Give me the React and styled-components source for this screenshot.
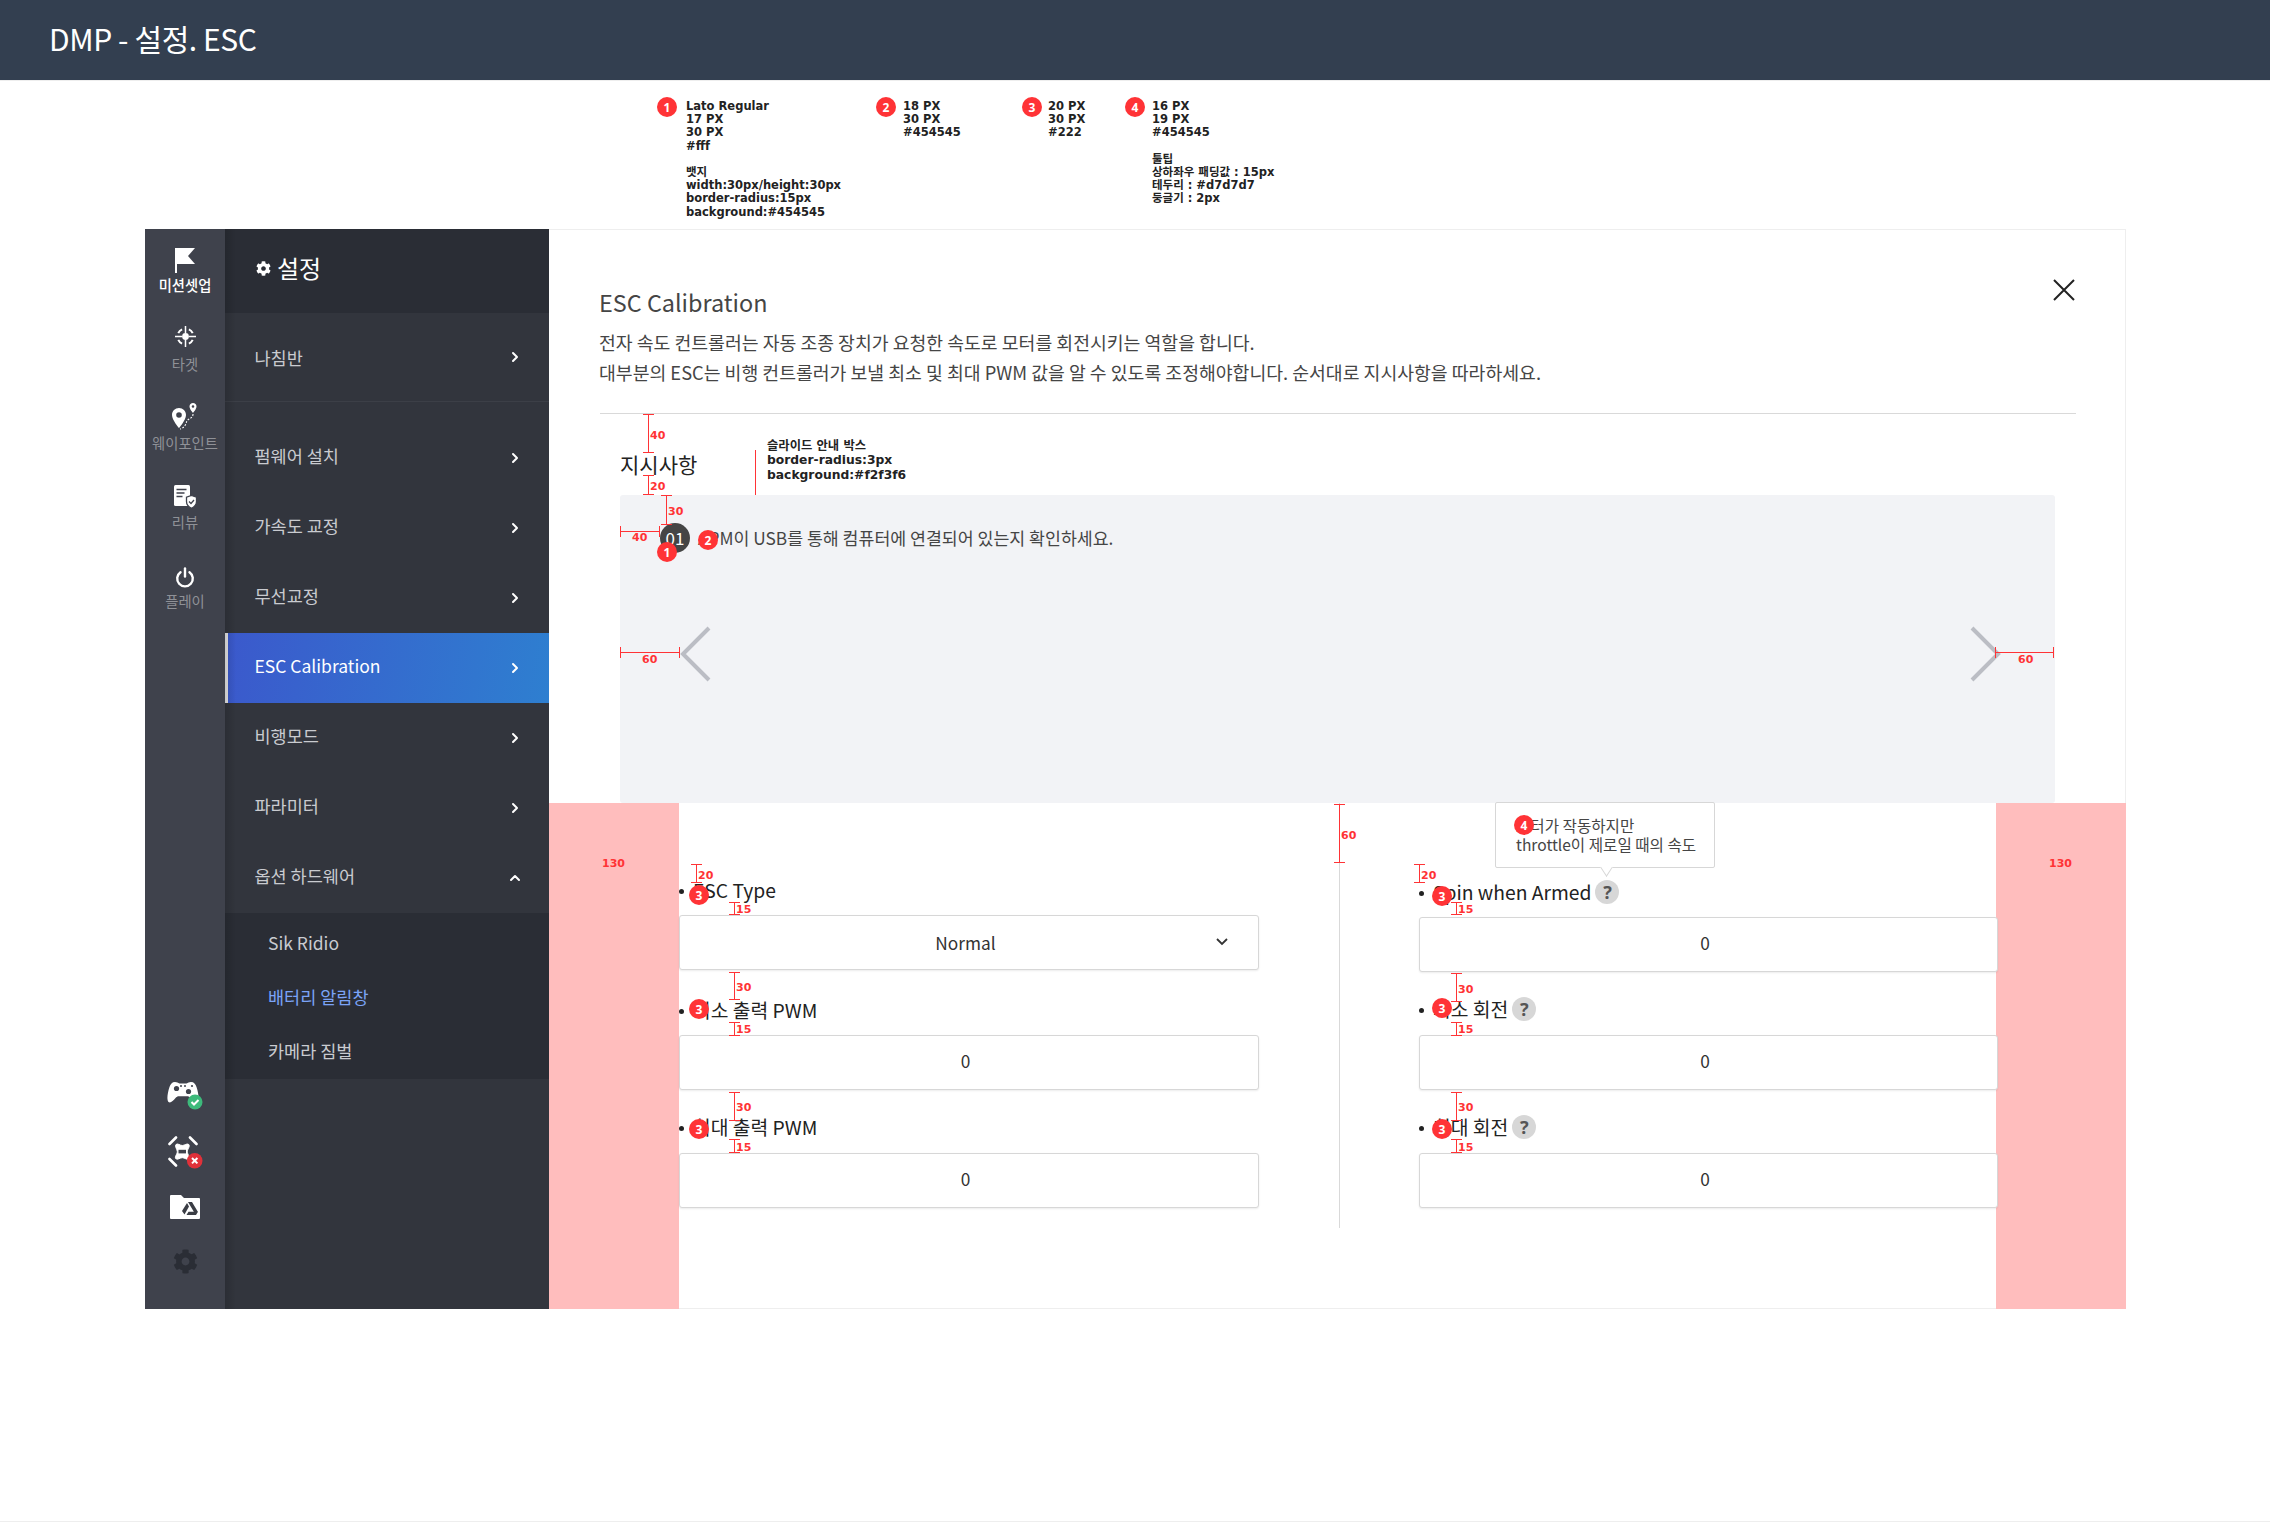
import styled, { createGlobalStyle } from 'styled-components'
import { FaCog } from 'react-icons/fa'

const RED = '#ff3336'
const RAIL = '#3f424c'

const GlobalStyle = createGlobalStyle`
  html, body {
    margin: 0;
    padding: 0;
    background: #fff;
  }
  body {
    font-family: "Noto Sans CJK KR", "Noto Sans", sans-serif;
    color: #454545;
  }
  * {
    box-sizing: border-box;
  }
`

const Page = styled.div`
  position: relative;
  width: 2270px;
  height: 1522px;
  display: flex;
  flex-direction: column;
  overflow: hidden;
`

const TopBar = styled.header`
  height: 81px;
  flex: none;
  background: #333f50;
  color: #fff;
  display: flex;
  align-items: center;
  padding: 0 0 4px 49px;
  font-size: 30px;
  font-weight: 400;
  letter-spacing: -0.4px;
  border-bottom: 1px solid #eee;
`

/* spec notes above the panel */
const SpecStrip = styled.section`
  height: 148px;
  flex: none;
  display: flex;
  padding: 16px 0 0 657px;
`

const SpecCol = styled.div`
  display: flex;
  align-items: flex-start;
  width: ${(p) => p.$width}px;
  gap: ${(p) => p.$gap}px;
`

const SpecText = styled.div`
  font-family: "DejaVu Sans", "Noto Sans CJK KR", sans-serif;
  font-weight: 700;
  font-size: 11.5px;
  line-height: 13.2px;
  color: #222;
  white-space: pre;
  padding-top: 3px;
`

const Badge = styled.span`
  width: 20px;
  height: 20px;
  flex: none;
  border-radius: 50%;
  background: ${RED};
  color: #fff;
  font-family: "Noto Sans", sans-serif;
  font-size: 12px;
  font-weight: 700;
  display: flex;
  align-items: center;
  justify-content: center;
`

const Panel = styled.main`
  width: 1981px;
  height: 1080px;
  flex: none;
  margin-left: 145px;
  display: flex;
`

/* icon rail */
const Rail = styled.nav`
  width: 80px;
  flex: none;
  background: ${RAIL};
  display: flex;
  flex-direction: column;
`

const RailItem = styled.div`
  height: 79px;
  display: flex;
  flex-direction: column;
  align-items: center;
  justify-content: flex-end;
  gap: 4px;
  padding-bottom: 1px;
  font-size: 14.3px;
  line-height: 18px;
  white-space: nowrap;
  color: ${(p) => (p.$active ? '#fff' : '#8f9197')};
  font-weight: ${(p) => (p.$active ? 500 : 400)};

  &:first-child {
    height: 66px;
    gap: 3px;
  }
`

const RailBottom = styled.div`
  margin-top: auto;
  padding-bottom: 35px;
  display: flex;
  flex-direction: column;
  align-items: center;
  gap: 26px;
  color: #2a2d35;
`

const GearSlot = styled.div`
  height: 25px;
  margin-top: 4px;
  font-size: 25px;
  line-height: 0;
`

/* settings menu */
const Menu = styled.aside`
  position: relative;
  width: 324px;
  flex: none;
  background: #32353d;
  color: #c9cbd0;

  &::before {
    content: '';
    position: absolute;
    top: 0;
    bottom: 0;
    left: 0;
    width: 11px;
    background: linear-gradient(90deg, rgba(0, 0, 0, 0.14), rgba(0, 0, 0, 0));
    pointer-events: none;
  }
`

const MenuHead = styled.div`
  height: 84px;
  background: #2a2d35;
  color: #fff;
  display: flex;
  align-items: center;
  gap: 6px;
  padding: 0 0 8px 31px;
  font-size: 24px;
`

const HeadGear = styled.span`
  font-size: 15px;
  line-height: 0;
  margin-top: 3px;
`

const MenuFirst = styled.div`
  height: 89px;
  margin-bottom: 21px;
  border-bottom: 1px solid #3c3f47;
  display: flex;
  align-items: center;
  justify-content: space-between;
  padding: 0 30px 0 29.5px;
  font-size: 17.5px;
`

const ChevronSvg = styled.svg`
  width: 8px;
  height: 12px;
  flex: none;
  fill: none;
  stroke: #fff;
  stroke-width: 2;
  stroke-linecap: round;
  stroke-linejoin: round;
  transform: ${(p) => (p.$up ? 'rotate(-90deg)' : 'none')};
`

const MenuRow = styled.div`
  height: 70px;
  display: flex;
  align-items: center;
  justify-content: space-between;
  padding: 0 30px 5px 29.5px;
  font-size: 17.5px;

  ${ChevronSvg} {
    margin-top: 5px;
  }

  ${(p) =>
    p.$active &&
    `
    color: #fff;
    padding-left: 26.5px;
    border-left: 3px solid #e8e8e8;
    background: linear-gradient(100deg, #3b59cc, #2e7fd0);
  `}
`

const SubMenu = styled.div`
  height: 166px;
  background: #2a2d35;
  padding-top: 3px;
`

const SubRow = styled.div`
  height: 54px;
  display: flex;
  align-items: center;
  padding: 0 0 2px 43px;
  font-size: 17.5px;
  color: ${(p) => (p.$active ? '#7ba3f7' : '#c9cbd0')};
`

const Chevron = ({ up }) => (
  <ChevronSvg viewBox="0 0 8 12" $up={up}>
    <polyline points="2,2 6,6 2,10" />
  </ChevronSvg>
)

/* content side */
const Content = styled.section`
  width: 1577px;
  flex: none;
  display: flex;
  flex-direction: column;
  border: 1px solid #eee;
  border-left: 0;
`

const Intro = styled.div`
  position: relative;
  margin: 0 49px 0 51px;
  padding: 57px 0 26px;
  border-bottom: 1px solid #d9d9d9;
`

const Title = styled.h2`
  margin: 0 0 10px -1px;
  font-size: 23.4px;
  font-weight: 400;
  line-height: 30px;
  color: #454545;
`

const Lead = styled.p`
  margin: 0 0 0 -1px;
  font-size: 18.3px;
  line-height: 30px;
  color: #454545;
`

const CloseIcon = styled.svg`
  position: absolute;
  top: 49px;
  right: 1px;
  width: 22px;
  height: 22px;
  stroke: #222;
  stroke-width: 2;
  fill: none;
`

const Slides = styled.div`
  margin: 0 70px 0 71px;
`

const SlidesHead = styled.h3`
  margin: 35px 0 16px;
  font-size: 21px;
  font-weight: 400;
  line-height: 30px;
  color: #222;
`

const SlideBox = styled.div`
  position: relative;
  height: 308px;
  background: #f2f3f6;
  border-radius: 3px;
  padding: 28px 40px 0;
  display: flex;
  align-items: flex-start;
  gap: 8px;
`

const StepNo = styled.span`
  width: 30px;
  height: 30px;
  flex: none;
  border-radius: 50%;
  background: #454545;
  color: #fff;
  font-size: 17px;
  line-height: 30px;
  text-align: center;
`

const StepText = styled.span`
  font-size: 17.3px;
  line-height: 30px;
  color: #454545;
`

const Arrow = styled.svg`
  position: absolute;
  top: 131px;
  ${(p) => (p.$right ? 'right: 54px;' : 'left: 60px;')}
  width: 31px;
  height: 56px;
  fill: none;
  stroke: #bbbdc4;
  stroke-width: 4;
`

const FormArea = styled.div`
  flex: 1;
  display: flex;
  margin: 0 -1px -1px 0;
`

const Gutter = styled.div`
  width: 130px;
  flex: none;
  background: #ffbdbd;
`

const FormBody = styled.div`
  flex: 1;
  min-width: 0;
  display: flex;
  align-items: flex-start;
  gap: 80px;
`

const FormCol = styled.div`
  position: relative;
  width: ${(p) => p.$width}px;
  flex: none;
`

const ColLine = styled.div`
  width: 1px;
  height: 425px;
  flex: none;
  margin-right: -1px;
  background: #d9d9d9;
`

const Field = styled.div`
  padding-top: ${(p) => p.$top}px;
`

const Label = styled.div`
  height: 30px;
  margin-bottom: ${(p) => p.$gap}px;
  padding-bottom: 2px;
  display: flex;
  align-items: center;
  font-size: 19.3px;
  color: #222;
  white-space: nowrap;

  &::before {
    content: '';
    width: 5px;
    height: 5px;
    margin: 2px 9px 0 0;
    border-radius: 50%;
    background: #222;
  }
`

const Help = styled.span`
  width: 24px;
  height: 24px;
  margin-left: 4px;
  border-radius: 50%;
  background: #d7d7d7;
  color: #555;
  font-family: "Noto Sans", sans-serif;
  font-size: 18px;
  font-weight: 700;
  display: flex;
  align-items: center;
  justify-content: center;
`

const NumberBox = styled.input`
  display: block;
  width: 100%;
  height: 55px;
  padding: 0 7px 4px 0;
  background: #fff;
  border: 1px solid #d7d7d7;
  border-radius: 3px;
  box-shadow: 0 1px 2px rgba(0, 0, 0, 0.08);
  font-family: inherit;
  font-size: 17.3px;
  text-align: center;
  color: #333;
  outline: none;
`

const SelectBox = styled.div`
  position: relative;
  height: 55px;
  padding: 0 7px 1px 0;
  background: #fff;
  border: 1px solid #d7d7d7;
  border-radius: 3px;
  box-shadow: 0 1px 2px rgba(0, 0, 0, 0.08);
  font-size: 17.3px;
  color: #333;
  display: flex;
  align-items: center;
  justify-content: center;
`

const SelectArrow = styled.svg`
  position: absolute;
  right: 30px;
  top: 22px;
  width: 12px;
  height: 8px;
  fill: none;
  stroke: #333;
  stroke-width: 1.8;
`

/* tooltip and redlines lie over the content */
const Tooltip = styled.div`
  position: absolute;
  left: 1495px;
  top: 802px;
  width: 220px;
  height: 66px;
  padding: 13px 0 0 20px;
  background: #fff;
  border: 1px solid #d7d7d7;
  border-radius: 2px;
  font-size: 15.6px;
  line-height: 18.5px;
  color: #454545;
  white-space: nowrap;

  &::after {
    content: '';
    position: absolute;
    left: 105px;
    bottom: -6px;
    width: 10px;
    height: 10px;
    background: #fff;
    border-right: 1px solid #d7d7d7;
    border-bottom: 1px solid #d7d7d7;
    transform: rotate(45deg) skew(12deg, 12deg);
  }
`

const Pin = styled(Badge)`
  position: absolute;
  left: ${(p) => p.$x - 10}px;
  top: ${(p) => p.$y - 10}px;
`

const VMark = styled.i`
  position: absolute;
  left: ${(p) => p.$x - 5}px;
  top: ${(p) => p.$y}px;
  width: 11px;
  height: ${(p) => p.$h}px;
  border-top: ${(p) => (p.$open ? 0 : 1)}px solid ${RED};
  border-bottom: ${(p) => (p.$open ? 0 : 1)}px solid ${RED};

  &::before {
    content: '';
    position: absolute;
    left: 5px;
    top: 0;
    bottom: 0;
    width: 1px;
    background: ${RED};
  }
`

const HMark = styled.i`
  position: absolute;
  left: ${(p) => p.$x}px;
  top: ${(p) => p.$y - 5}px;
  height: 11px;
  width: ${(p) => p.$w}px;
  border-left: 1px solid ${RED};
  border-right: 1px solid ${RED};

  &::before {
    content: '';
    position: absolute;
    top: 5px;
    left: 0;
    right: 0;
    height: 1px;
    background: ${RED};
  }
`

const MarkNum = styled.span`
  position: absolute;
  left: ${(p) => p.$x}px;
  top: ${(p) => p.$y - 7}px;
  font-family: "DejaVu Sans", sans-serif;
  font-size: 11px;
  font-weight: 700;
  line-height: 14px;
  color: ${RED};
`

const BoxNote = styled.div`
  position: absolute;
  left: 767px;
  top: 439px;
  font-family: "DejaVu Sans", "Noto Sans CJK KR", sans-serif;
  font-size: 12.3px;
  font-weight: 700;
  line-height: 14.3px;
  color: #222;
  white-space: pre;
`

const PageEnd = styled.div`
  flex: 1;
  border-bottom: 1px solid #eee;
`

const TargetSvg = styled.svg`
  margin-bottom: 4px;
`

const menuRows = ['펌웨어 설치', '가속도 교정', '무선교정', 'ESC Calibration', '비행모드', '파라미터']

const vMarks = [
  [648, 414, 39, '40', 650, 436],
  [648, 475, 20, '20', 650, 487],
  [666, 495, 30, '30', 668, 512],
  [696, 864, 19, '20', 698, 876],
  [734, 902, 13, '15', 736, 910],
  [734, 972, 28, '30', 736, 988],
  [734, 1022, 14, '15', 736, 1030],
  [734, 1092, 29, '30', 736, 1108],
  [734, 1139, 14, '15', 736, 1148],
  [1339, 804, 59, '60', 1341, 836],
  [1419, 864, 19, '20', 1421, 876],
  [1456, 902, 13, '15', 1458, 910],
  [1456, 973, 29, '30', 1458, 990],
  [1456, 1022, 14, '15', 1458, 1030],
  [1456, 1092, 29, '30', 1458, 1108],
  [1456, 1139, 14, '15', 1458, 1148],
]

const pins = [
  [667, 552, 1],
  [708, 540, 2],
  [699, 895, 3],
  [699, 1009, 3],
  [699, 1129, 3],
  [1442, 896, 3],
  [1442, 1008, 3],
  [1442, 1129, 3],
  [1524, 825, 4],
]

const FlagIcon = () => (
  <svg width="20" height="25" viewBox="0 0 20 25" fill="#fff">
    <path d="M0 0h20l-7 8 7 8H2v9H0z" />
  </svg>
)

const TargetIcon = () => (
  <TargetSvg width="21" height="21" viewBox="0 0 21 21" fill="none" stroke="#fff" strokeWidth="1.5">
    <circle cx="10.5" cy="10.5" r="3.4" fill="#fff" stroke="none" />
    <path d="M10.500 0v7M10.500 14v7M0 10.500h7M14 10.500h7" />
    <path d="M13.900 3.300A8 8 0 0 1 17.700 7.100M17.700 13.900A8 8 0 0 1 13.900 17.700M7.100 17.700A8 8 0 0 1 3.300 13.900M3.300 7.100A8 8 0 0 1 7.100 3.300" strokeWidth="2" />
  </TargetSvg>
)

const WaypointIcon = () => (
  <svg width="26" height="27" viewBox="0 0 26 27" fill="#fff">
    <path fillRule="evenodd" d="M7 5C3.100 5 0 8 0 12c0 5 7 13 7 13s7-8 7-13c0-4-3.100-7-7-7zm0 4.200a2.800 2.800 0 1 1 0 5.600 2.800 2.800 0 0 1 0-5.600z" />
    <path fillRule="evenodd" d="M21 0c-2 0-3.500 1.500-3.500 3.500 0 2.500 3.500 6.500 3.500 6.500s3.500-4 3.500-6.500C24.500 1.500 23 0 21 0zm0 2.200a1.300 1.300 0 1 1 0 2.600 1.300 1.300 0 0 1 0-2.600z" />
    <path d="M21 11c0 5-5.500 4-6.500 8-.6 3-2.500 6-6.500 7" fill="none" stroke="#fff" strokeWidth="1.100" strokeDasharray="1.800 1.500" />
  </svg>
)

const ReviewIcon = () => (
  <svg width="23" height="24" viewBox="0 0 23 24">
    <rect width="16" height="21" rx="1.500" fill="#fff" />
    <path d="M2.500 4.500h10M2.500 8h8M2.500 11.500h6" stroke={RAIL} strokeWidth="1.300" />
    <path d="M17.500 10.500l5 1.700v4.300c0 3.200-2.200 5.500-5 6.800-2.800-1.300-5-3.600-5-6.800v-4.300z" fill="#fff" stroke={RAIL} strokeWidth="1.300" />
    <path d="M15 16.500l2 2 3-3.500" fill="none" stroke={RAIL} strokeWidth="1.300" />
  </svg>
)

const PowerIcon = () => (
  <svg width="20" height="21" viewBox="0 0 20 21" fill="none" stroke="#fff" strokeWidth="2.400" strokeLinecap="round">
    <path d="M10 1.500v8" />
    <path d="M5.500 5.200a7.800 7.800 0 1 0 9 0" />
  </svg>
)

const GamepadIcon = () => (
  <svg width="36" height="29" viewBox="0 0 36 29">
    <path fill="#fff" d="M8 1C5 1 3.500 3 2.500 6 .5 12-.5 19 1.500 21c2 1.500 4.500-1 7-4 1-1.200 2-1.700 3.500-1.700h8c1.500 0 2.500.5 3.500 1.700 2.500 3 5 5.500 7 4 2-2 1-9-1-15C28.500 3 27 1 24 1c-2 0-3 1-4.500 1.500h-7C11 2 10 1 8 1z" />
    <circle cx="9.500" cy="7.500" r="2.600" fill={RAIL} />
    <circle cx="21.500" cy="10.500" r="2.600" fill={RAIL} />
    <circle cx="25" cy="5" r="1.100" fill={RAIL} />
    <circle cx="14" cy="5" r="1" fill={RAIL} />
    <circle cx="18" cy="5" r="1" fill={RAIL} />
    <circle cx="28" cy="21" r="7.500" fill="#3dba7b" />
    <path d="M24.500 21l2.500 2.500 4.500-4.500" fill="none" stroke="#fff" strokeWidth="2" />
  </svg>
)

const DroneIcon = () => (
  <svg width="35" height="33" viewBox="0 0 35 33">
    <path d="M1.500 8l6.500-6.500M22 1.500L28.500 8M1.500 23L8 29.500" stroke="#fff" strokeWidth="2.600" strokeLinecap="round" />
    <path fill="#fff" stroke="#fff" strokeWidth="1" d="M8 8.500c2-1.500 3.800 1 6.300 1s4.500-2.500 6.500-1c1.500 2-1.500 4.700-1.500 7.200s3 5 1.500 7c-2 1.500-4-1-6.500-1s-4.500 2.500-6.500 1c-1.500-2 1.500-4.500 1.500-7S6.500 10.500 8 8.500z" />
    <rect x="10.500" y="13.800" width="7.500" height="3.600" fill={RAIL} />
    <circle cx="26.700" cy="24.700" r="7.800" fill="#e0313a" />
    <path d="M24 22l5.400 5.400M29.400 22L24 27.400" stroke="#fff" strokeWidth="2" />
  </svg>
)

const FolderIcon = () => (
  <svg width="30" height="24" viewBox="0 0 30 24">
    <path fill="#fff" d="M1 0h10l3 3h15a1 1 0 0 1 1 1v19a1 1 0 0 1-1 1H1a1 1 0 0 1-1-1V1a1 1 0 0 1 1-1z" />
    <path fill="#3a3d45" d="M18 7h4l6 10h-4zM17 8l2 3.500-4.500 8-2.500-3.500zM16.500 20l2-3.200H28L26 20z" />
  </svg>
)

export default function App() {
  return (
    <Page>
      <GlobalStyle />
      <TopBar>DMP - 설정. ESC</TopBar>

      <SpecStrip>
        <SpecCol $width={219} $gap={9}>
          <Badge>1</Badge>
          <SpecText>{'Lato Regular\n17 PX\n30 PX\n#fff\n\n뱃지\nwidth:30px/height:30px\nborder-radius:15px\nbackground:#454545'}</SpecText>
        </SpecCol>
        <SpecCol $width={146} $gap={7}>
          <Badge>2</Badge>
          <SpecText>{'18 PX\n30 PX\n#454545'}</SpecText>
        </SpecCol>
        <SpecCol $width={103} $gap={6}>
          <Badge>3</Badge>
          <SpecText>{'20 PX\n30 PX\n#222'}</SpecText>
        </SpecCol>
        <SpecCol $width={300} $gap={7}>
          <Badge>4</Badge>
          <SpecText>{'16 PX\n19 PX\n#454545\n\n툴팁\n상하좌우 패딩값 : 15px\n테두리 : #d7d7d7\n둥글기 : 2px'}</SpecText>
        </SpecCol>
      </SpecStrip>

      <Panel>
        <Rail>
          <RailItem $active>
            <FlagIcon />
            미션셋업
          </RailItem>
          <RailItem>
            <TargetIcon />
            타겟
          </RailItem>
          <RailItem>
            <WaypointIcon />
            웨이포인트
          </RailItem>
          <RailItem>
            <ReviewIcon />
            리뷰
          </RailItem>
          <RailItem>
            <PowerIcon />
            플레이
          </RailItem>
          <RailBottom>
            <GamepadIcon />
            <DroneIcon />
            <FolderIcon />
            <GearSlot>
              <FaCog />
            </GearSlot>
          </RailBottom>
        </Rail>

        <Menu>
          <MenuHead>
            <HeadGear>
              <FaCog />
            </HeadGear>
            설정
          </MenuHead>
          <MenuFirst>
            나침반
            <Chevron />
          </MenuFirst>
          {menuRows.map((row) => (
            <MenuRow key={row} $active={row === 'ESC Calibration'}>
              {row}
              <Chevron />
            </MenuRow>
          ))}
          <MenuRow>
            옵션 하드웨어
            <Chevron up />
          </MenuRow>
          <SubMenu>
            <SubRow>Sik Ridio</SubRow>
            <SubRow $active>배터리 알림창</SubRow>
            <SubRow>카메라 짐벌</SubRow>
          </SubMenu>
        </Menu>

        <Content>
          <Intro>
            <Title>ESC Calibration</Title>
            <Lead>전자 속도 컨트롤러는 자동 조종 장치가 요청한 속도로 모터를 회전시키는 역할을 합니다.</Lead>
            <Lead>대부분의 ESC는 비행 컨트롤러가 보낼 최소 및 최대 PWM 값을 알 수 있도록 조정해야합니다. 순서대로 지시사항을 따라하세요.</Lead>
            <CloseIcon viewBox="0 0 22 22">
              <path d="M1 1l20 20M21 1L1 21" />
            </CloseIcon>
          </Intro>

          <Slides>
            <SlidesHead>지시사항</SlidesHead>
            <SlideBox>
              <StepNo>01</StepNo>
              <StepText>APM이 USB를 통해 컴퓨터에 연결되어 있는지 확인하세요.</StepText>
              <Arrow viewBox="0 0 31 56">
                <polyline points="29,2 3,28 29,54" />
              </Arrow>
              <Arrow viewBox="0 0 31 56" $right>
                <polyline points="2,2 28,28 2,54" />
              </Arrow>
            </SlideBox>
          </Slides>

          <FormArea>
            <Gutter />
            <FormBody>
              <FormCol $width={580}>
                <Field $top={73}>
                  <Label $gap={9}>ESC Type</Label>
                  <SelectBox>
                    Normal
                    <SelectArrow viewBox="0 0 12 8">
                      <polyline points="1,1 6,6 11,1" />
                    </SelectArrow>
                  </SelectBox>
                </Field>
                <Field $top={26}>
                  <Label $gap={9}>최소 출력 PWM</Label>
                  <NumberBox readOnly value="0" />
                </Field>
                <Field $top={23}>
                  <Label $gap={10}>최대 출력 PWM</Label>
                  <NumberBox readOnly value="0" />
                </Field>
              </FormCol>
              <ColLine />
              <FormCol $width={579}>
                <Field $top={75}>
                  <Label $gap={9}>
                    Spin when Armed
                    <Help>?</Help>
                  </Label>
                  <NumberBox readOnly value="0" />
                </Field>
                <Field $top={23}>
                  <Label $gap={10}>
                    최소 회전
                    <Help>?</Help>
                  </Label>
                  <NumberBox readOnly value="0" />
                </Field>
                <Field $top={23}>
                  <Label $gap={10}>
                    최대 회전
                    <Help>?</Help>
                  </Label>
                  <NumberBox readOnly value="0" />
                </Field>
              </FormCol>
            </FormBody>
            <Gutter />
          </FormArea>
        </Content>
      </Panel>
      <PageEnd />

      <Tooltip>
        모터가 작동하지만
        <br />
        throttle이 제로일 때의 속도
      </Tooltip>

      <VMark $x={755} $y={450} $h={45} $open />
      <BoxNote>{'슬라이드 안내 박스\nborder-radius:3px\nbackground:#f2f3f6'}</BoxNote>
      <HMark $x={620} $y={531} $w={40} />
      <MarkNum $x={632} $y={538}>40</MarkNum>
      <HMark $x={620} $y={652} $w={60} />
      <MarkNum $x={642} $y={660}>60</MarkNum>
      <HMark $x={1995} $y={652} $w={59} />
      <MarkNum $x={2018} $y={660}>60</MarkNum>
      <MarkNum $x={602} $y={864}>130</MarkNum>
      <MarkNum $x={2049} $y={864}>130</MarkNum>
      {vMarks.map(([x, y, h, num, nx, ny]) => (
        <span key={`${x}-${y}`}>
          <VMark $x={x} $y={y} $h={h} />
          <MarkNum $x={nx} $y={ny}>{num}</MarkNum>
        </span>
      ))}
      {pins.map(([x, y, n]) => (
        <Pin key={`${x}-${y}`} $x={x} $y={y}>{n}</Pin>
      ))}
    </Page>
  )
}
